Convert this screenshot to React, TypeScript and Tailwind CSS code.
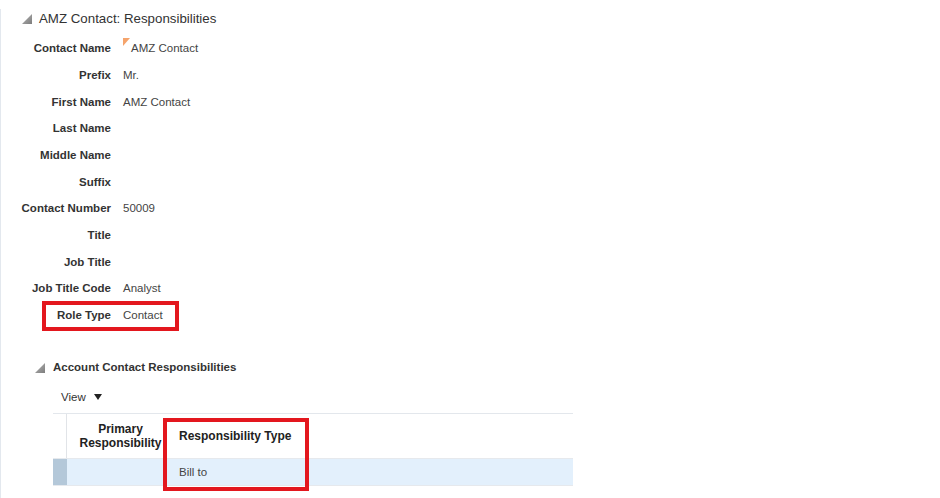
import React from "react";

const Disclosure = () => (
  <svg width="10" height="10" viewBox="0 0 10 10" className="shrink-0">
    <defs>
      <linearGradient id="dg" x1="0" y1="0" x2="1" y2="1">
        <stop offset="0" stopColor="#b5b5b5" />
        <stop offset="1" stopColor="#7d7d7d" />
      </linearGradient>
    </defs>
    <polygon points="10,0 10,10 0,10" fill="url(#dg)" />
  </svg>
);

const rows: [string, string][] = [
  ["Contact Name", "AMZ Contact"],
  ["Prefix", "Mr."],
  ["First Name", "AMZ Contact"],
  ["Last Name", ""],
  ["Middle Name", ""],
  ["Suffix", ""],
  ["Contact Number", "50009"],
  ["Title", ""],
  ["Job Title", ""],
  ["Job Title Code", "Analyst"],
  ["Role Type", "Contact"],
];

export default function App() {
  return (
    <div className="min-h-screen bg-white border-l border-[#e3e8ee] font-['Liberation_Sans',Arial,sans-serif] text-[#333]">
      {/* Title */}
      <div className="flex items-center h-[20px] mt-[8.5px] pl-[21px] gap-[7px]">
        <Disclosure />
        <span className="text-[13.3px] text-[#333]">AMZ Contact: Responsibilities</span>
      </div>

      {/* Form */}
      <div className="mt-[7px] flex flex-col">
        {rows.map(([label, value], i) => (
          <div key={label} className="relative flex items-center h-[26.7px]">
            <div className="w-[110px] text-right text-[11.5px] font-bold text-[#333]">{label}</div>
            <div className="ml-[12px] text-[11.5px] text-[#444] flex items-center">
              {i === 0 && (
                <span className="self-start mt-[-2px] mr-px inline-block w-0 h-0 border-t-[8px] border-t-[#f5a46c] border-r-[7px] border-r-transparent" />
              )}
              {value}
            </div>
            {label === "Role Type" && (
              <div className="absolute left-[41px] top-[-1.5px] w-[137px] h-[30px] border-4 border-[#e3171e]" />
            )}
          </div>
        ))}
      </div>

      {/* Section 2 */}
      <div className="flex items-center h-[20px] mt-[29px] pl-[34px] gap-[8px]">
        <Disclosure />
        <span className="text-[11.5px] font-bold text-[#333]">Account Contact Responsibilities</span>
      </div>

      <div className="flex items-center h-[20px] mt-[9.4px] pl-[60px] gap-[8px]">
        <span className="text-[11.5px] text-[#333]">View</span>
        <svg width="8" height="6" viewBox="0 0 8 6">
          <polygon points="0,0 8,0 4,6" fill="#222" />
        </svg>
      </div>

      <div className="relative mt-[5.8px] ml-[52px] w-[520px] border-t border-[#e3e7ec]">
        <div className="flex h-[44px]">
          <div className="w-[14px] border-r border-[#e1e4e8]" />
          <div className="w-[107px] flex items-center justify-center text-center text-[12px] font-bold leading-[14px] text-[#222]">
            Primary
            <br />
            Responsibility
          </div>
          <div className="flex-1 flex items-center pl-[5px] text-[12px] font-bold text-[#222]">
            Responsibility Type
          </div>
        </div>
        <div className="flex h-[28px] border-t border-[#dde3ea] border-b border-[#e6e9ed] bg-[#e3f0fc]">
          <div className="w-[14px] bg-[#b4c8d9]" />
          <div className="w-[107px]" />
          <div className="flex-1 flex items-center pl-[5px] text-[11.5px] text-[#444]">Bill to</div>
        </div>
        <div className="absolute left-[110px] top-[4px] w-[146px] h-[73px] border-4 border-[#e3171e]" />
      </div>
    </div>
  );
}
